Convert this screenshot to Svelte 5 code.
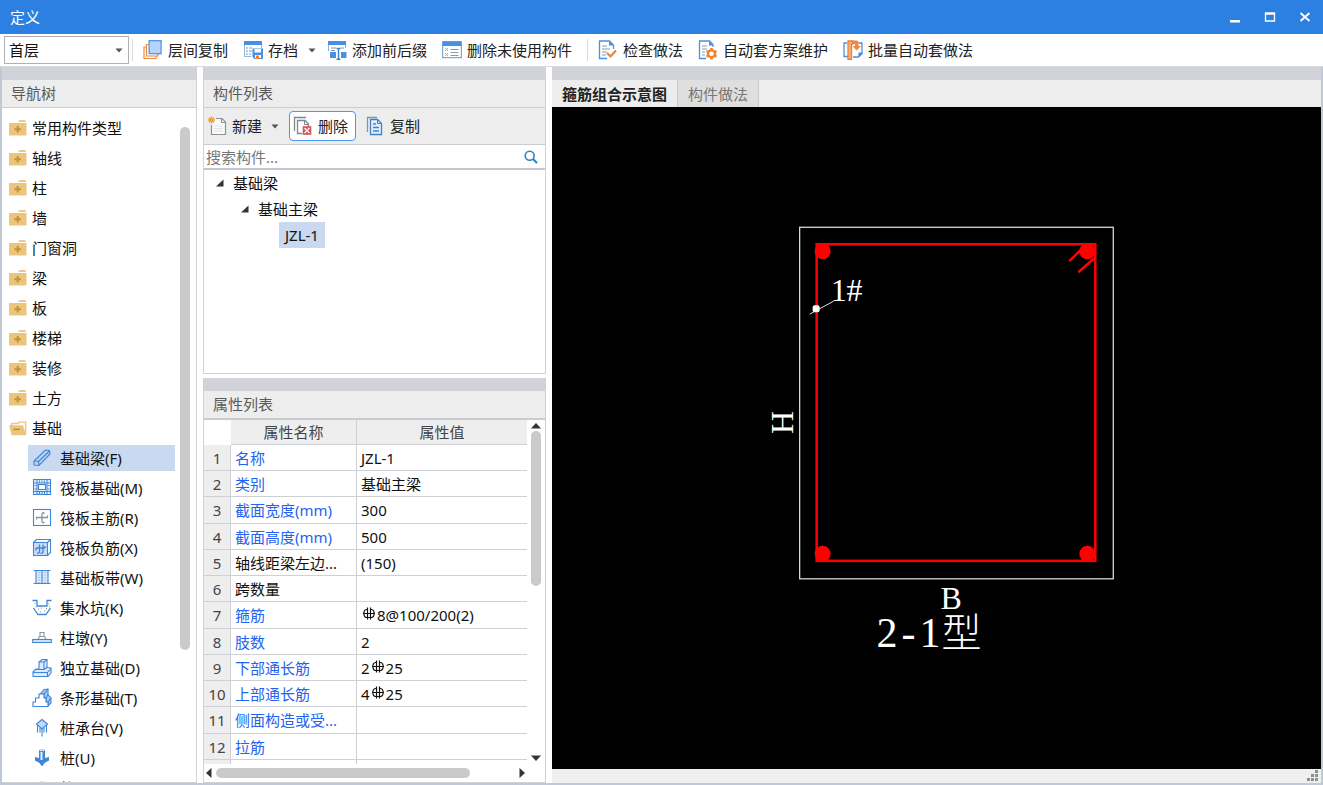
<script>
  const folders = ['常用构件类型', '轴线', '柱', '墙', '门窗洞', '梁', '板', '楼梯', '装修', '土方'];

  const foundations = [
    { icon: 'beam', label: '基础梁(F)', selected: true },
    { icon: 'raft', label: '筏板基础(M)' },
    { icon: 'mainbar', label: '筏板主筋(R)' },
    { icon: 'negbar', label: '筏板负筋(X)' },
    { icon: 'strip', label: '基础板带(W)' },
    { icon: 'pit', label: '集水坑(K)' },
    { icon: 'pier', label: '柱墩(Y)' },
    { icon: 'isolated', label: '独立基础(D)' },
    { icon: 'stripbase', label: '条形基础(T)' },
    { icon: 'cap', label: '桩承台(V)' },
    { icon: 'pile', label: '桩(U)' },
    { icon: 'cushion', label: '垫层' }
  ];

  const rows = [
    { name: '名称', value: 'JZL-1', key: true },
    { name: '类别', value: '基础主梁', key: true },
    { name: '截面宽度(mm)', value: '300', key: true },
    { name: '截面高度(mm)', value: '500', key: true },
    { name: '轴线距梁左边...', value: '(150)' },
    { name: '跨数量', value: '' },
    { name: '箍筋', pre: '', value: '8@100/200(2)', key: true, bar: true },
    { name: '肢数', value: '2', key: true },
    { name: '下部通长筋', pre: '2', value: '25', key: true, bar: true },
    { name: '上部通长筋', pre: '4', value: '25', key: true, bar: true },
    { name: '侧面构造或受...', value: '', key: true },
    { name: '拉筋', value: '', key: true }
  ];
</script>

{#snippet caret()}
  <svg class="caret" width="8" height="5" viewBox="0 0 8 5"><path d="M0.5 0.5h7L4 4.5z" fill="#555" /></svg>
{/snippet}

{#snippet toolIcon(kind)}
  <svg class="ic" width="20" height="20" viewBox="0 0 20 20" fill="none">
    {#if kind === 'layers'}
      <path d="M3.500 7H1v11.500h12V16M5.500 4.500H3.500V16H15v-2" stroke="#f08a3c" stroke-width="1.200" />
      <rect x="6.100" y="0.700" width="12" height="13" fill="#b4d4fb" stroke="#4a90e2" stroke-width="1.200" />
    {:else if kind === 'archive'}
      <path d="M1.500 1v15.500H8M18.500 1v7" stroke="#8fb5e3" />
      <path d="M1 1h18v4H1z" fill="#4a90e2" />
      <path d="M3 8h2M6 8h3M3 11h2M6 11h3M3 14h2M6 14h2" stroke="#8795a3" />
      <path d="M9.500 8.500H20v10.500h-8.500l-2-2z" fill="#4a90e2" />
      <path d="M11.500 9h6.500v3.500h-6.500zM12 15h6v3h-6z" fill="#fff" />
      <path d="M13 15.500h3V19h-3z" fill="#f5822a" />
    {:else if kind === 'affix'}
      <path d="M1.500 11V1.500h17V8" stroke="#7fb0e8" />
      <path d="M1 1h18v4H1z" fill="#4a90e2" />
      <path d="M4 8h5M4 10.500h4M14 8h3" stroke="#8795a3" />
      <path d="M3 12h6v6H3zM14 12h5.500v6H14z" fill="#4a90e2" />
      <path d="M9.500 8.500h4M9.500 19.300h4M11.500 9v10" stroke="#3f7fd0" stroke-width="1.400" />
    {:else if kind === 'unused'}
      <rect x="0.700" y="1.700" width="18.600" height="16" fill="#fff" stroke="#5a97dc" />
      <path d="M0.500 1.500h19V6h-19z" fill="#4a90e2" />
      <path d="M3 8l3 3M6 8l-3 3M3 13l3 3M6 13l-3 3" stroke="#f0963c" />
      <path d="M8.500 9.500h8M8.500 12.500h8M8.500 15.500h8" stroke="#8b98a5" />
    {:else if kind === 'check'}
      <path d="M15.500 9V5l-4-4H1.500v17.500H9" stroke="#4a90e2" stroke-width="1.300" />
      <path d="M11 1v4.500h4.500z" fill="#4a90e2" />
      <path d="M4 6h5M4 9h8M4 12h5M4 15h4" stroke="#8b98a5" stroke-width="1.200" />
      <path d="M9 13l3.500 3.500 5.500-6" stroke="#f5822a" stroke-width="2.200" />
    {:else if kind === 'scheme'}
      <path d="M15 7V4.500L11.500 1h-10v17.500H8" stroke="#4a90e2" stroke-width="1.300" />
      <path d="M11 1v4.500h4.500z" fill="#4a90e2" />
      <path d="M4 6h5M4 9h5M4 12h3M4 15h3" stroke="#8b98a5" stroke-width="1.200" />
      <circle cx="13.500" cy="13.800" r="3.500" stroke="#f5822a" stroke-width="2.400" />
      <path d="M13.500 8v2M13.500 17.500v2M8.500 11l1.800 1M16.700 15.600l1.800 1M8.500 16.600l1.800-1M16.700 12l1.800-1" stroke="#f5822a" stroke-width="2.400" />
    {:else if kind === 'batch'}
      <path d="M4 3H1v13.500h4M15.500 3H19v10.500l-4 3.500h-5" stroke="#4a90e2" stroke-width="1.300" />
      <path d="M19.500 12.500v1.500l-4 4v-5.500z" fill="#4a90e2" />
      <path d="M5 1h5v3H8.500v15.500H5z" fill="#fbb27c" stroke="#ee7d2e" stroke-width="1.300" />
      <path d="M10 0.500h3.500c1.500 0 2 1 2 2.500v3H18L13.500 10.500 9.500 6H12V4h-2z" fill="#f08a3c" />
    {:else if kind === 'new'}
      <path d="M8 2.500h6L17.500 6v12.500h-14V9" fill="#fafafa" stroke="#8b939c" stroke-width="1.200" />
      <path d="M13.500 2.500V6.500h4" stroke="#8b939c" stroke-width="1.200" />
      <path d="M3.500 0.500v7M0 4h7M1 1.500l5 5M6 1.500l-5 5" stroke="#f5a030" stroke-width="1.300" />
      <path d="M6 10h9M6 12.500h9M6 15h9" stroke="#e2e4e6" />
    {:else if kind === 'delete'}
      <path d="M13 1.500H1.500V15" stroke="#7d8791" stroke-width="1.300" />
      <path d="M9 17.500H4.500v-13H12l3.500 3.500v2" stroke="#7d8791" stroke-width="1.300" />
      <path d="M11.500 4.500v4h4" stroke="#7d8791" />
      <rect x="9.700" y="10.200" width="8.600" height="8.600" fill="#d65353" />
      <path d="M11.500 12l5 5M16.500 12l-5 5" stroke="#fff" stroke-width="1.300" />
    {:else if kind === 'copy'}
      <path d="M12 1.500H2.500V16" stroke="#8795a3" stroke-width="1.300" />
      <path d="M5.500 3.500h7l4 4v11h-11z" fill="#e3effd" stroke="#3f80d0" stroke-width="1.300" />
      <path d="M12.500 3.500v4h4" stroke="#3f80d0" />
      <path d="M8 8h3M8 11.500h6M8 15h6" stroke="#3f80d0" stroke-width="1.300" />
    {/if}
  </svg>
{/snippet}

{#snippet partIcon(kind)}
  <svg class="ic" width="20" height="20" viewBox="0 0 20 20" fill="none" stroke="#3e86d8" stroke-width="1.100">
    {#if kind === 'beam'}
      <path d="M2 13L13.500 2l4 .5.500 3.500L7 17.500l-5-.5z" fill="#b9d3f2" />
      <path d="M2 13l4.500.5.500 4M6.500 13.500L17.500 3" />
    {:else if kind === 'raft'}
      <rect x="1.500" y="1.500" width="17" height="15" fill="#e6f0fc" />
      <path d="M5 1.500v15M15 1.500v15M1.500 5h17M1.500 13.500h17" stroke-width="1" />
      <rect x="6.500" y="6.500" width="7" height="5" fill="#fff" />
      <path d="M7.500 2.500v2M10 2.500v2M12.500 2.500v2M7.500 14v2M10 14v2M12.500 14v2M2.500 7.500h2M2.500 11h2M15.500 7.500h2M15.500 11h2" stroke-width="1" />
    {:else if kind === 'mainbar'}
      <rect x="1.500" y="1.500" width="17" height="16" />
      <path d="M4.500 11.500V9.500h11v-2M12.500 5.500c-1.500-1.500-2.500-.5-2.500 1v7c0 1.500 1.500 1.500 2.500.5" stroke="#8a949e" stroke-width="1.300" />
    {:else if kind === 'negbar'}
      <path d="M1.500 4.500l3-3h14v13l-3 3M15.500 4.500l3-3" />
      <rect x="1.500" y="4.500" width="14" height="13" fill="#c9ddf6" />
      <path d="M4 10h9M7.500 6.500v7c0 1.500-1 2-2.500 1.500M11 6.500v7c0 1.500-1 2-2.500 1.500M4 10v2.500M13 8v2" stroke-width="1.300" />
    {:else if kind === 'strip'}
      <path d="M4 3h12v12H4z" fill="#dce9f9" stroke="none" />
      <path d="M1.500 2.500h17M1.500 15.500h17M4 2.500v13M10 2.500v13M16 2.500v13" />
      <path d="M7 4v11M13 4v11" stroke="#7ba9dd" stroke-dasharray="1 1.500" />
    {:else if kind === 'pit'}
      <path d="M0.500 2.500H5V8h10V2.500h4.500M1.500 10l4.500 6.500h8L18.500 10" stroke-width="1.300" />
      <path d="M2.500 5.500h1M3.500 9h1M6 11h1M9 10h1M8 14h1M12 13h1M14 10.500h1M16 6h1M17 8.500h1" stroke="#8a949e" stroke-width="1.200" />
    {:else if kind === 'pier'}
      <path d="M6 11.500l1.500-3h5l1.500 3M8 8.500v-4h4v4" stroke="#8a949e" />
      <rect x="0.700" y="11.500" width="18.600" height="3" fill="#d5e5f9" />
    {:else if kind === 'isolated'}
      <path d="M1 14l3-3h3V4l3-2.500h5V9.500l4 .5v5l-3 3.500H1z" fill="#dfebfa" />
      <path d="M1 14.500h14.500v4M7 4h5v7.500M12 4l3-2.500M15.500 14.500L19 10.500M4 11.500h8l3-2" />
    {:else if kind === 'stripbase'}
      <path d="M8 6l4-4.500 4-.5v5.500l3 3.500v5l-3 3v-4h-2v-4l-2-.5V6z" fill="#a9c9f0" />
      <path d="M1 18.500v-4.500h2.500v-4H7V6h5v4h2v4h2v4.500z" fill="#fff" />
      <path d="M12 6l4-5M14 10l2-3.500M16 14l3-4" />
    {:else if kind === 'cap'}
      <path d="M10 1.500l5.500 4.500L10 11 4.500 6z" fill="#c4daf5" />
      <path d="M5.500 7v7.500M14.500 7v7.500M10 11v7.500M8 9.500v5M12 9.500v5" />
    {:else if kind === 'pile'}
      <path d="M7 2.500c0-1.500 6-1.500 6 0v7.500l4-1v3.500l-4.500 2.500-2.500 3.500-2.500-3.500L3 12.500V9l4 1z" fill="#3e86d8" stroke="none" />
      <path d="M8.500 4h2v8h-2z" fill="#e6f0fc" stroke="none" />
      <path d="M8 2.700c1-.6 3-.6 4 0" stroke="#e6f0fc" />
    {:else}
      <path d="M1 8c2-5 16-5 18 0z" fill="#b9d3f2" />
    {/if}
  </svg>
{/snippet}

{#snippet toolButton(icon, label, menu = false)}
  <button class="tool" class:menu>{@render toolIcon(icon)}<span>{label}</span>{#if menu}{@render caret()}{/if}</button>
{/snippet}

<div class="window">
  <header class="titlebar">
    <h1>定义</h1>
    <div class="winbtns">
      <button aria-label="最小化"><svg width="12" height="12" viewBox="0 0 12 12"><path d="M1 9h10v2.500H1z" fill="#fff" /></svg></button>
      <button aria-label="最大化"><svg width="12" height="12" viewBox="0 0 12 12"><path d="M1.500 2h9v8h-9zM1.500 3h9" fill="none" stroke="#fff" stroke-width="1.300" /></svg></button>
      <button aria-label="关闭"><svg width="12" height="12" viewBox="0 0 12 12"><path d="M1.500 2l9 8M10.500 2l-9 8" stroke="#fff" stroke-width="1.800" /></svg></button>
    </div>
  </header>

  <div class="toolbar">
    <div class="floor">
      <select aria-label="楼层"><option>首层</option></select>
      {@render caret()}
    </div>
    <i class="sep"></i>
    {@render toolButton('layers', '层间复制')}
    {@render toolButton('archive', '存档', true)}
    {@render toolButton('affix', '添加前后缀')}
    {@render toolButton('unused', '删除未使用构件')}
    <i class="sep wide"></i>
    {@render toolButton('check', '检查做法')}
    {@render toolButton('scheme', '自动套方案维护')}
    {@render toolButton('batch', '批量自动套做法')}
  </div>

  <main>
    <section class="panel nav">
      <div class="band"></div>
      <h2>导航树</h2>
      <div class="navbody">
        <ul class="navtree">
          {#each folders as f}
            <li>
              <svg width="18" height="18" viewBox="0 0 18 18"><path d="M0 4h17.500v12.500H0z" fill="#ecc47c" /><path d="M9 3L10.500 1H16l1.500 2z" fill="#edc987" /><path d="M8.700 7v6.500M5.500 10.200H12" stroke="#c0923a" stroke-width="2" /></svg>
              <span>{f}</span>
            </li>
          {/each}
          <li>
            <svg width="20" height="18" viewBox="0 0 20 18"><path d="M3 6V4h7l1.500-1.500H18.500V16" fill="none" stroke="#ecc47c" stroke-width="1.500" /><path d="M0 6h15.500l3.500 11H3z" fill="#ecc47c" /><path d="M5 10.500h7" stroke="#b98a2c" stroke-width="1.600" /></svg>
            <span>基础</span>
          </li>
          {#each foundations as f}
            <li class="child"><span class="leaf" class:on={f.selected}>{@render partIcon(f.icon)}{f.label}</span></li>
          {/each}
        </ul>
        <div class="vtrack"><div class="thumb" style:height="84%"></div></div>
      </div>
    </section>

    <div class="middle">
      <section class="panel list">
        <div class="band"></div>
        <h2>构件列表</h2>
        <div class="listtools">
          <button class="lt">{@render toolIcon('new')}<span>新建</span>{@render caret()}</button>
          <button class="lt active">{@render toolIcon('delete')}<span>删除</span></button>
          <button class="lt">{@render toolIcon('copy')}<span>复制</span></button>
        </div>
        <label class="search">
          <input type="text" placeholder="搜索构件..." aria-label="搜索构件" />
          <svg width="14" height="14" viewBox="0 0 14 14" fill="none" stroke="#2a86c8"><circle cx="5.700" cy="5.700" r="4.500" stroke-width="1.600" /><path d="M9 9l4 4" stroke-width="2.200" /></svg>
        </label>
        <ul class="parts">
          <li><svg width="10" height="10" viewBox="0 0 10 10"><path d="M8.500 1.500v7H1z" fill="#333" /></svg>基础梁</li>
          <li class="l2"><svg width="10" height="10" viewBox="0 0 10 10"><path d="M8.500 1.500v7H1z" fill="#333" /></svg>基础主梁</li>
          <li class="l3"><span>JZL-1</span></li>
        </ul>
      </section>

      <section class="panel props">
        <div class="band"></div>
        <h2>属性列表</h2>
        <div class="gridwrap">
          <div class="gridclip">
            <table>
              <thead>
                <tr><td class="corner"></td><th scope="col" class="cname">属性名称</th><th scope="col">属性值</th></tr>
              </thead>
              <tbody>
                {#each rows as r, i}
                  <tr>
                    <th scope="row">{i + 1}</th>
                    <td class:key={r.key}>{r.name}</td>
                    <td>
                      {#if r.bar}{r.pre}<svg class="rebar" width="14" height="13" viewBox="0 0 14 13" fill="none" stroke="#111" stroke-width="1.200"><path d="M5.500 0.500v12M8.500 0.500v12M1 6.500h12M5.500 2.500H4.500C1 3 1 10 4.500 10.500h5C13 10 13 3 9.500 2.500h-1" /></svg>{/if}{r.value}
                    </td>
                  </tr>
                {/each}
                <tr><th scope="row"></th><td></td><td></td></tr>
              </tbody>
            </table>
          </div>
          <div class="vbar">
            <svg width="10" height="6" viewBox="0 0 10 6"><path d="M5 0l5 5.500H0z" fill="#333" /></svg>
            <div class="vspace"><div class="thumb" style:height="48%"></div></div>
            <svg width="10" height="6" viewBox="0 0 10 6"><path d="M5 6l5-5.500H0z" fill="#333" /></svg>
          </div>
          <div class="hbar">
            <svg width="6" height="10" viewBox="0 0 6 10"><path d="M0 5l5.500-5v10z" fill="#333" /></svg>
            <div class="hspace"><div class="thumb" style:width="85%"></div></div>
            <svg width="6" height="10" viewBox="0 0 6 10"><path d="M6 5L0.500 0v10z" fill="#333" /></svg>
          </div>
        </div>
      </section>
    </div>

    <section class="view">
      <div class="band"></div>
      <div class="tabs">
        <button class="tab current">箍筋组合示意图</button>
        <button class="tab">构件做法</button>
      </div>
      <div class="canvas">
        <svg viewBox="0 0 770 662" role="img" aria-label="箍筋组合示意图">
          <rect x="248" y="120" width="314" height="352" fill="none" stroke="#e8e8e8" stroke-width="1.200" />
          <g fill="#f00">
            <rect x="265" y="137" width="279" height="317" fill="none" stroke="#f00" stroke-width="2.500" />
            <circle cx="271" cy="144" r="8" />
            <circle cx="536" cy="144" r="8" />
            <circle cx="271" cy="447" r="8" />
            <circle cx="536" cy="447" r="8" />
            <path d="M533 139l-15 15M543 151l-16 14" stroke="#f00" stroke-width="2.500" />
          </g>
          <path d="M258 207L282 194" stroke="#ddd" />
          <rect x="261" y="198" width="7" height="7" rx="2" fill="#fff" />
          <g fill="#fff" class="cad">
            <text x="279" y="194" font-size="32">1#</text>
            <text x="389" y="502" font-size="32">B</text>
            <text transform="translate(241 327) rotate(-90)" font-size="32">H</text>
            <text x="325 350 368 390" y="540" font-size="42">2-1<tspan font-size="40">型</tspan></text>
          </g>
        </svg>
      </div>
      <div class="status">
        <svg width="12" height="12" viewBox="0 0 12 12" fill="#8b8f96"><path d="M8 0h3v3H8zM4 4h3v3H4zM8 4h3v3H8zM0 8h3v3H0zM4 8h3v3H4zM8 8h3v3H8z" /></svg>
      </div>
    </section>
  </main>
</div>

<style>
  :global(body) { margin: 0; }
  .window {
    box-sizing: border-box;
    height: 100vh;
    display: flex;
    flex-direction: column;
    background: #fff;
    color: #111;
    font: 15px/20px "Noto Sans", "Noto Sans CJK SC", sans-serif;
    overflow: hidden;
  }
  .window :global(*) { box-sizing: border-box; }
  button, select, input { font: inherit; color: inherit; margin: 0; }
  button { border: 0; background: none; padding: 0; white-space: nowrap; }
  ul { list-style: none; margin: 0; padding: 0; }
  svg { flex: none; display: block; }

  .titlebar {
    flex: none;
    height: 34px;
    display: flex;
    align-items: center;
    justify-content: space-between;
    padding: 0 12px 0 10px;
    background: #2c80e2;
    color: #fff;
  }
  h1 { margin: 0; font-size: 15px; font-weight: 400; }
  .winbtns { display: flex; gap: 23px; }

  .toolbar {
    flex: none;
    height: 33px;
    display: flex;
    align-items: center;
    padding: 0 4px;
    border-bottom: 1px solid #d9dadd;
  }
  .floor { display: flex; align-items: center; position: relative; }
  .floor select {
    width: 125px;
    height: 28px;
    padding: 0 4px;
    border: 1px solid #aeb2b8;
    border-radius: 0;
    background: #fff;
    appearance: none;
  }
  .floor .caret { position: absolute; right: 6px; pointer-events: none; }
  .sep { width: 1px; height: 22px; margin: 0 5px 0 3px; background: #d9d9d9; }
  .sep.wide { margin: 0 5px; }
  .tool { display: flex; align-items: center; gap: 5px; height: 28px; padding: 0 10px 0 5px; color: #222; }
  .tool.menu { padding-right: 6px; }
  .tool .caret { margin-left: 5px; }

  main {
    flex: 1;
    min-height: 0;
    display: grid;
    grid-template-columns: 195px 343px minmax(0, 1fr);
    gap: 6px;
    border: solid #c0c9d8;
    border-width: 0 2px 2px;
  }
  .panel { display: flex; flex-direction: column; min-height: 0; border: 1px solid #cfd2d7; border-top: 0; }
  .nav { border-left: 0; }
  .band { flex: none; height: 13px; background: #d2d3d9; }
  h2 {
    flex: none;
    height: 28px;
    margin: 0;
    padding: 3px 9px;
    background: #ededed;
    border-bottom: 1px solid #c9ccd1;
    color: #5a5a5a;
    font-size: 15px;
    font-weight: 400;
  }

  .navbody { flex: 1; min-height: 0; display: flex; overflow: hidden; }
  .navtree { flex: 1; padding: 5px 0 0 7px; }
  .navtree li { height: 30px; display: flex; align-items: center; }
  .navtree li > svg { width: 18px; margin-right: 5px; }
  .navtree .child { padding-left: 19px; }
  .leaf { width: 147px; height: 26px; display: flex; align-items: center; gap: 8px; padding-left: 4px; white-space: nowrap; }
  .leaf.on, .parts .l3 span { background: #c9daf0; }
  .vtrack { width: 16px; padding: 19px 0 32px; }
  .thumb { background: #cacaca; border-radius: 5px; }
  .vtrack .thumb { width: 10px; }

  .middle { display: grid; grid-template-rows: minmax(0, 307fr) minmax(0, 405fr); gap: 4px; min-height: 0; }
  .listtools { flex: none; height: 37px; display: flex; align-items: center; gap: 6px; padding: 0 3px; background: #ededed; border-bottom: 1px solid #c9ccd1; color: #222; }
  .lt { height: 30px; display: flex; align-items: center; gap: 4px; border: 1px solid transparent; border-radius: 4px; }
  .lt .caret { margin: 0 3px 0 5px; }
  .lt.active { padding: 0 7px 0 3px; border-color: #4a97ec; background: #fff; }
  .lt.active, .lt:last-child { gap: 5px; }
  .lt:last-child { padding-left: 2px; }
  .search { flex: none; height: 25px; display: flex; align-items: center; padding: 0 7px 0 2px; border-bottom: 2px solid #c5c9cf; }
  .search input { flex: 1; min-width: 0; height: 22px; padding: 0; border: 0; outline: 0; background: none; }
  .search input::placeholder { color: #777; opacity: 1; }
  .parts li { height: 26px; display: flex; align-items: center; gap: 8px; padding-left: 11px; }
  .parts .l2 { padding-left: 36px; }
  .parts .l3 { padding-left: 75px; }
  .parts .l3 span { height: 26px; padding: 3px 6px; }

  .props h2 { border-bottom-width: 2px; height: 29px; }
  .gridwrap { flex: 1; min-height: 0; display: grid; grid-template: minmax(0, 1fr) 18px / minmax(0, 1fr) 18px; }
  .gridclip { overflow: hidden; }
  table { width: 100%; table-layout: fixed; border-collapse: separate; border-spacing: 0; }
  tr { height: 26px; }
  thead tr { height: 25px; }
  tbody tr:nth-child(4n + 3) { height: 27px; }
  td, th { padding: 0 4px; border: solid #cdd0d4; border-width: 0 1px 1px 0; font-weight: 400; text-align: left; white-space: nowrap; overflow: hidden; }
  td:last-child, th:last-child { border-right: 0; }
  thead th { background: #eee; color: #444; text-align: center; }
  .corner { width: 27px; border: 0; }
  .cname { width: 126px; }
  tbody th { background: #eee; color: #444; text-align: center; padding: 0; }
  .key { color: #2463f0; }
  .rebar { display: inline-block; vertical-align: 1px; margin: 0 1px; }
  .vbar { display: flex; flex-direction: column; align-items: center; padding: 3px 0; gap: 2px; }
  .vspace { flex: 1; min-height: 0; }
  .vspace .thumb { width: 10px; }
  .hbar { grid-column: 1 / 3; display: flex; align-items: center; gap: 4px; padding: 0 20px 0 2px; }
  .hspace { flex: 1; }
  .hspace .thumb { height: 10px; }

  .view { display: flex; flex-direction: column; min-width: 0; min-height: 0; }
  .tabs { flex: none; height: 27px; display: flex; background: #ededed; }
  .tab { padding: 0 10px; color: #777; background: #dfdfdf; border-right: 1px solid #c6c8cc; }
  .tab.current { color: #222; font-weight: 700; background: #ededed; }
  .canvas { flex: 1; min-height: 0; background: #000; }
  .canvas svg { width: 100%; height: 100%; }
  .cad { font-family: "Liberation Serif", "Noto Sans CJK SC", serif; font-weight: 300; }
  .status { flex: none; height: 14px; display: flex; justify-content: flex-end; align-items: center; padding-right: 2px; background: #efefef; }
</style>
